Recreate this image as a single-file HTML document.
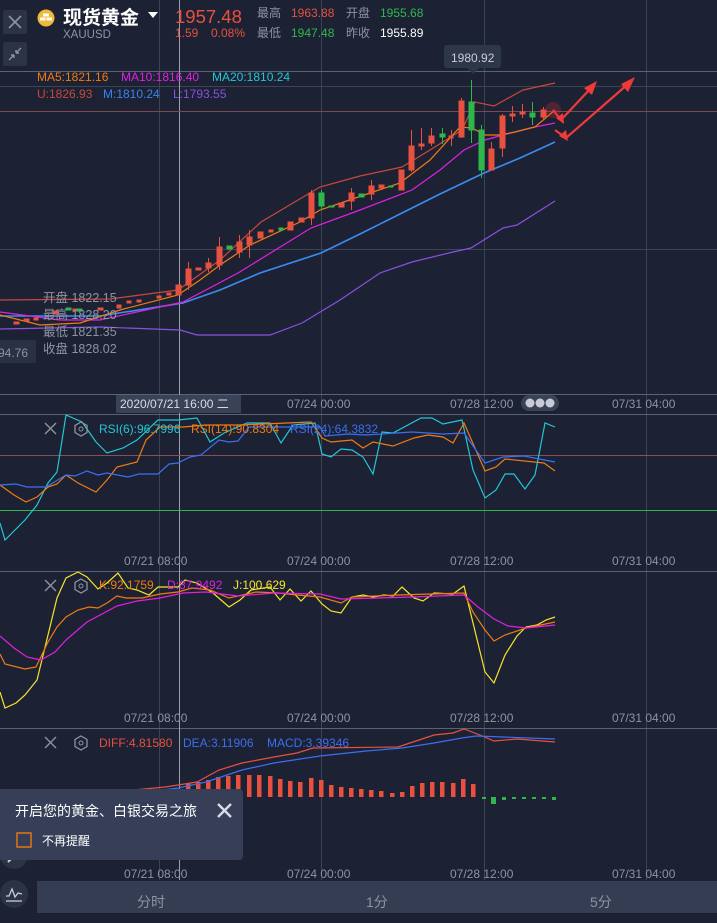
<!DOCTYPE html>
<html><head><meta charset="utf-8"><style>
body{margin:0;width:717px;height:923px;background:#1c2234;overflow:hidden;font-family:"Liberation Sans","Noto Sans CJK SC",sans-serif;}
svg{position:absolute;left:0;top:0}
text{font-family:"Liberation Sans","Noto Sans CJK SC",sans-serif}
</style></head><body>
<svg width="717" height="923" viewBox="0 0 717 923">
<rect width="717" height="923" fill="#1c2234"/>
<!-- grid -->
<g stroke="#3b4356" stroke-width="1">
<line x1="159.5" y1="0" x2="159.5" y2="880"/><line x1="321.5" y1="0" x2="321.5" y2="880"/>
<line x1="484.5" y1="0" x2="484.5" y2="880"/><line x1="646.5" y1="0" x2="646.5" y2="880"/>
<line x1="0" y1="86.5" x2="717" y2="86.5"/><line x1="0" y1="249.5" x2="717" y2="249.5"/>
</g>
<g stroke="#5a6275" stroke-width="1">
<line x1="0" y1="71.5" x2="717" y2="71.5"/><line x1="0" y1="394.5" x2="717" y2="394.5"/>
<line x1="0" y1="414.5" x2="717" y2="414.5"/><line x1="0" y1="571.5" x2="717" y2="571.5"/>
<line x1="0" y1="728.5" x2="717" y2="728.5"/>
</g>
<line x1="179.5" y1="0" x2="179.5" y2="880" stroke="#9aa0ad" stroke-width="1"/>
<line x1="0" y1="111.5" x2="717" y2="111.5" stroke="#7a4a50" stroke-width="1"/>
<line x1="0" y1="455.5" x2="717" y2="455.5" stroke="#8a4d5a" stroke-width="1"/>
<line x1="0" y1="510.5" x2="717" y2="510.5" stroke="#2eb84a" stroke-width="1"/>

<!-- header -->
<rect x="3" y="10" width="24" height="24" rx="2" fill="#2c3344"/>
<path d="M9 16 L21 28 M21 16 L9 28" stroke="#8d93a3" stroke-width="1.6"/>
<rect x="3" y="42" width="24" height="24" rx="2" fill="#2c3344"/>
<path d="M9 60 L14 55 M14 55 h-3 M14 55 v3 M21 48 L16 53 M16 53 h3 M16 53 v-3" stroke="#8d93a3" stroke-width="1.4" fill="none"/>
<circle cx="46" cy="18" r="8.5" fill="#f0b93a"/>
<rect x="43" y="13.5" width="6" height="3" fill="#fff"/><rect x="40" y="17.5" width="5.5" height="3" fill="#fff"/><rect x="46.5" y="17.5" width="5.5" height="3" fill="#fff"/>
<text x="63" y="24" font-size="19" font-weight="bold" fill="#fff">现货黄金</text>
<path d="M148 12 L158 12 L153 18 Z" fill="#fff"/>
<text x="63" y="38" font-size="11.5" fill="#8d93a3">XAUUSD</text>
<text x="175" y="23" font-size="18.5" fill="#e8503f">1957.48</text>
<text x="175" y="37" font-size="12" fill="#e8503f">1.59</text>
<text x="211" y="37" font-size="12" fill="#e8503f">0.08%</text>
<text x="257" y="17" font-size="12" fill="#8d93a3">最高</text>
<text x="291" y="17" font-size="12" fill="#e8503f">1963.88</text>
<text x="346" y="17" font-size="12" fill="#8d93a3">开盘</text>
<text x="380" y="17" font-size="12" fill="#2eb84a">1955.68</text>
<text x="257" y="37" font-size="12" fill="#8d93a3">最低</text>
<text x="291" y="37" font-size="12" fill="#2eb84a">1947.48</text>
<text x="346" y="37" font-size="12" fill="#8d93a3">昨收</text>
<text x="380" y="37" font-size="12" fill="#fff">1955.89</text>

<text x="37" y="81" font-size="12" fill="#ef7b12">MA5:1821.16</text>
<text x="121" y="81" font-size="12" fill="#e020e0">MA10:1816.40</text>
<text x="212" y="81" font-size="12" fill="#22c7d4">MA20:1810.24</text>
<text x="37" y="98" font-size="12" fill="#c8483a">U:1826.93</text>
<text x="103" y="98" font-size="12" fill="#3b82f0">M:1810.24</text>
<text x="173" y="98" font-size="12" fill="#8a50e0">L:1793.55</text>

<rect x="444" y="45" width="57" height="23" rx="3" fill="#2e3649"/>
<path d="M467 68 L473 74 L479 68Z" fill="#2e3649"/>
<text x="451" y="62" font-size="12" fill="#c8ccd6">1980.92</text>

<!-- bollinger & MA -->
<g fill="none" stroke-width="1.2">
<polyline stroke="#c8483a" points="0,300 110,299 178,290 220,260 261,222 320,187 360,176 402,167 430,150 462,130 475,102 494,106 523,90 555,83"/>
<polyline stroke="#3b8cf0" stroke-width="1.6" points="0,316 100,316 183,303 220,290 260,273 321,253 360,234 402,213 440,194 484,173 520,158 555,142"/>
<polyline stroke="#8a50e0" points="0,329 100,327 180,330 197,335 270,335 302,323 340,300 380,273 412,262 453,252 471,248 503,228 517,225 555,201"/>
<polyline stroke="#e020e0" points="0,312 60,320 100,320 183,302 238,273 311,228 360,210 412,190 440,170 464,150 485,140 503,135 530,128 555,123"/>
<polyline stroke="#ef7b12" points="0,315 40,325 80,323 120,310 178,295 200,280 220,265 250,245 300,222 320,210 370,193 400,183 430,160 460,127 472,128 485,135 500,135 515,132 535,127 555,110"/>
</g>

<!-- candles -->
<g id="c">
<g fill="#e8503f" stroke="#e8503f">
<rect x="14" y="322" width="5" height="2"/><rect x="24" y="319" width="5" height="2"/><rect x="34" y="318" width="4" height="2"/>
<rect x="53" y="311" width="5" height="3"/><rect x="73" y="309" width="5" height="2"/><rect x="98" y="308" width="5" height="2"/>
<rect x="117" y="305" width="4" height="3"/><rect x="127" y="301" width="4" height="2"/><rect x="137" y="300" width="4" height="2"/>
<rect x="157" y="296" width="4" height="2"/><rect x="167" y="293" width="4" height="2"/><rect x="176" y="285" width="5" height="10"/>
<rect x="186" y="269" width="5" height="16"/><rect x="196" y="268" width="5" height="2"/><rect x="206" y="263" width="5" height="5"/>
<rect x="217" y="247" width="5" height="18"/><rect x="237" y="242" width="5" height="10"/><rect x="247" y="237" width="5" height="8"/>
<rect x="258" y="232" width="5" height="6"/><rect x="269" y="230" width="4" height="2"/><rect x="288" y="222" width="5" height="8"/>
<rect x="299" y="218" width="5" height="4"/><rect x="309" y="193" width="5" height="25"/><rect x="339" y="203" width="5" height="4"/>
<rect x="349" y="193" width="5" height="8"/><rect x="369" y="186" width="5" height="8"/><rect x="379" y="185" width="5" height="3"/>
<rect x="399" y="170" width="5" height="20"/><rect x="409" y="146" width="5" height="24"/><rect x="419" y="144" width="5" height="2"/>
<rect x="429" y="136" width="5" height="7"/><rect x="449" y="136" width="4" height="2"/><rect x="459" y="101" width="5" height="36"/>
<rect x="489" y="149" width="5" height="21"/><rect x="500" y="116" width="5" height="32"/><rect x="510" y="114" width="5" height="2"/>
<rect x="520" y="112" width="5" height="2"/><rect x="541" y="110" width="5" height="7"/>
</g>
<g stroke="#e8503f" stroke-width="1">
<line x1="188.5" y1="262" x2="188.5" y2="290"/><line x1="208.5" y1="258" x2="208.5" y2="272"/><line x1="219.5" y1="237" x2="219.5" y2="270"/>
<line x1="239.5" y1="235" x2="239.5" y2="258"/><line x1="249.5" y1="230" x2="249.5" y2="258"/><line x1="311.5" y1="190" x2="311.5" y2="225"/>
<line x1="351.5" y1="188" x2="351.5" y2="210"/><line x1="371.5" y1="180" x2="371.5" y2="200"/><line x1="411.5" y1="130" x2="411.5" y2="172"/>
<line x1="421.5" y1="128" x2="421.5" y2="150"/><line x1="431.5" y1="128" x2="431.5" y2="146"/><line x1="451.5" y1="130" x2="451.5" y2="146"/>
<line x1="461.5" y1="98" x2="461.5" y2="138"/><line x1="491.5" y1="142" x2="491.5" y2="158"/><line x1="502.5" y1="114" x2="502.5" y2="157"/>
<line x1="512.5" y1="106" x2="512.5" y2="122"/><line x1="522.5" y1="104" x2="522.5" y2="118"/><line x1="543.5" y1="107" x2="543.5" y2="120"/>
</g>
<g fill="#2eb84a" stroke="#2eb84a">
<rect x="66" y="308" width="5" height="2"/><rect x="77" y="309" width="5" height="2"/><rect x="227" y="246" width="5" height="3"/>
<rect x="279" y="228" width="4" height="2"/><rect x="319" y="193" width="5" height="13"/><rect x="329" y="206" width="5" height="1"/>
<rect x="359" y="194" width="5" height="3"/><rect x="389" y="186" width="4" height="1"/><rect x="440" y="134" width="5" height="3"/>
<rect x="469" y="102" width="5" height="28"/><rect x="479" y="130" width="5" height="40"/><rect x="530" y="113" width="5" height="4"/>
</g>
<g stroke="#2eb84a" stroke-width="1">
<line x1="471.5" y1="80" x2="471.5" y2="143"/><line x1="481.5" y1="125" x2="481.5" y2="178"/><line x1="532.5" y1="102" x2="532.5" y2="125"/>
<line x1="321.5" y1="190" x2="321.5" y2="210"/><line x1="442.5" y1="128" x2="442.5" y2="144"/>
</g>
</g>
<!-- arrows -->
<circle cx="553" cy="110" r="8" fill="#e8303a" opacity="0.25"/>
<g stroke="#f03a3a" stroke-width="2.2" fill="#f03a3a">
<polyline fill="none" points="553,110 561,120 591,88"/>
<path d="M597 81 L584 88 L592 95Z" stroke="none"/>
<path d="M564 124 L556 118 L563 113Z" stroke="none"/>
<polyline fill="none" points="555,130 566,138 628,84"/>
<path d="M635 77 L621 84 L628 92Z" stroke="none"/>
<path d="M568 141 L559 136 L566 130Z" stroke="none"/>
</g>

<!-- info -->
<g font-size="12.5" fill="#8d93a3">
<text x="43" y="302">开盘 1822.15</text><text x="43" y="319">最高 1828.20</text>
<text x="43" y="336">最低 1821.35</text><text x="43" y="353">收盘 1828.02</text>
</g>
<rect x="-4" y="340" width="40" height="23" rx="2" fill="#2a3145"/>
<text x="-2" y="357" font-size="12" fill="#8d93a3">94.76</text>

<!-- time axis -->
<rect x="116" y="395" width="125" height="18" fill="#3a4257"/>
<text x="120" y="408" font-size="12" fill="#d8dce4">2020/07/21 16:00 二</text>
<g font-size="12" fill="#8d93a3">
<text x="287" y="408">07/24 00:00</text><text x="450" y="408">07/28 12:00</text><text x="612" y="408">07/31 04:00</text>
<text x="124" y="565">07/21 08:00</text><text x="287" y="565">07/24 00:00</text><text x="450" y="565">07/28 12:00</text><text x="612" y="565">07/31 04:00</text>
<text x="124" y="722">07/21 08:00</text><text x="287" y="722">07/24 00:00</text><text x="450" y="722">07/28 12:00</text><text x="612" y="722">07/31 04:00</text>
<text x="124" y="878">07/21 08:00</text><text x="287" y="878">07/24 00:00</text><text x="450" y="878">07/28 12:00</text><text x="612" y="878">07/31 04:00</text>
</g>
<rect x="521" y="395" width="38" height="16" rx="8" fill="#3a4257"/>
<circle cx="530" cy="403" r="4.5" fill="#c8ccd6"/><circle cx="540" cy="403" r="4.5" fill="#c8ccd6"/><circle cx="550" cy="403" r="4.5" fill="#c8ccd6"/>

<!-- RSI -->
<g fill="none" stroke-width="1.2">
<polyline stroke="#22c7d4" points="0,523 5,540 25,520 37,505 48,483 57,472 66,415 82,422 96,442 107,453 123,448 137,440 158,420 178,420 197,418 210,442 224,433 247,423 270,423 281,443 293,425 315,423 322,454 331,457 341,449 352,450 363,457 373,474 382,432 393,433 421,418 432,418 443,424 462,420 473,470 485,498 496,490 505,474 514,474 525,489 535,475 545,423 555,427"/>
<polyline stroke="#ef7b12" points="0,485 14,495 26,502 37,497 48,487 57,484 66,475 78,483 96,492 107,480 117,467 137,462 146,440 160,427 183,427 206,425 238,425 311,422 322,438 331,442 352,440 363,448 373,442 393,446 414,438 428,435 443,437 453,443 464,423 485,471 496,467 505,459 544,463 555,471"/>
<polyline stroke="#3b6ff0" points="0,485 16,484 27,487 46,487 66,475 75,476 87,471 98,475 107,473 128,477 139,474 158,474 169,464 178,463 190,457 201,455 219,440 229,442 238,441 249,427 320,427 325,436 348,434 366,435 412,432 443,434 464,433 485,463 503,457 524,456 555,462"/>
</g>
<path d="M45 423 L56 434 M56 423 L45 434" stroke="#8d93a3" stroke-width="1.4"/>
<path d="M81 422 L87 425.5 L87 432.5 L81 436 L75 432.5 L75 425.5Z" stroke="#8d93a3" stroke-width="1.3" fill="none"/><circle cx="81" cy="429" r="2" stroke="#8d93a3" fill="none"/>
<text x="99" y="433" font-size="12" fill="#22c7d4">RSI(6):96.7996</text>
<text x="191" y="433" font-size="12" fill="#ef7b12">RSI(14):90.8304</text>
<text x="290" y="433" font-size="12" fill="#3b6ff0">RSI(24):64.3832</text>

<!-- KDJ -->
<g fill="none" stroke-width="1.2">
<polyline stroke="#f5e52a" points="0,692 5,708 16,703 25,695 37,680 48,635 57,598 66,578 78,572 87,577 98,589 107,583 118,573 128,588 137,590 149,595 158,587 178,587 185,580 197,583 213,593 229,607 240,600 251,590 270,587 280,600 290,589 301,601 311,591 322,604 331,611 341,613 352,597 363,595 373,597 384,595 393,596 402,587 414,598 423,601 434,593 453,594 464,586 485,672 494,683 505,655 517,636 526,627 537,625 546,620 555,617"/>
<polyline stroke="#ef7b12" points="0,654 5,664 25,669 36,667 48,642 57,627 66,617 78,610 89,607 98,608 107,603 117,596 126,598 142,598 160,594 178,592 192,588 210,590 229,598 256,592 279,593 297,595 320,597 341,603 352,597 398,595 464,593 473,612 485,630 494,641 505,635 526,628 555,622"/>
<polyline stroke="#e020e0" points="0,636 14,648 27,657 41,660 55,652 66,640 87,622 117,606 137,601 160,598 183,593 206,592 238,596 274,593 320,594 341,599 412,597 464,595 478,607 494,619 508,626 526,628 555,625"/>
</g>
<path d="M45 580 L56 591 M56 580 L45 591" stroke="#8d93a3" stroke-width="1.4"/>
<path d="M81 579 L87 582.5 L87 589.5 L81 593 L75 589.5 L75 582.5Z" stroke="#8d93a3" stroke-width="1.3" fill="none"/><circle cx="81" cy="586" r="2" stroke="#8d93a3" fill="none"/>
<text x="99" y="589" font-size="12" fill="#ef7b12">K:92.1759</text>
<text x="167" y="589" font-size="12" fill="#e020e0">D:87.9492</text>
<text x="233" y="589" font-size="12" fill="#f5e52a">J:100.629</text>

<!-- MACD -->
<g fill="#e8503f">
<rect x="186" y="783" width="4.5" height="14"/><rect x="196" y="782" width="4.5" height="15"/><rect x="206" y="780" width="4.5" height="17"/>
<rect x="216" y="777" width="4.5" height="20"/><rect x="226" y="776" width="4.5" height="21"/><rect x="236" y="775" width="4.5" height="22"/>
<rect x="247" y="775" width="4.5" height="22"/><rect x="257" y="775" width="4.5" height="22"/><rect x="268" y="776" width="4.5" height="21"/>
<rect x="278" y="779" width="4.5" height="18"/><rect x="288" y="781" width="4.5" height="16"/><rect x="298" y="782" width="4.5" height="15"/>
<rect x="309" y="778" width="4.5" height="19"/><rect x="319" y="780" width="4.5" height="17"/><rect x="329" y="785" width="4.5" height="12"/>
<rect x="339" y="787" width="4.5" height="10"/><rect x="349" y="788" width="4.5" height="9"/><rect x="359" y="789" width="4.5" height="8"/>
<rect x="369" y="790" width="4.5" height="7"/><rect x="379" y="791" width="4.5" height="6"/><rect x="390" y="793" width="4.5" height="4"/>
<rect x="400" y="792" width="4.5" height="5"/><rect x="410" y="786" width="4.5" height="11"/><rect x="420" y="783" width="4.5" height="14"/>
<rect x="430" y="782" width="4.5" height="15"/><rect x="440" y="782" width="4.5" height="15"/><rect x="451" y="783" width="4.5" height="14"/>
<rect x="461" y="779" width="4.5" height="18"/><rect x="471" y="784" width="4.5" height="13"/>
</g>
<g fill="#2eb84a">
<rect x="482" y="797" width="4" height="2"/><rect x="491" y="797" width="5" height="7"/><rect x="502" y="797" width="4" height="3"/>
<rect x="512" y="797" width="4" height="2"/><rect x="522" y="797" width="4" height="2"/><rect x="532" y="797" width="4" height="2"/>
<rect x="542" y="797" width="4" height="2"/><rect x="552" y="797" width="4" height="3"/>
</g>
<g fill="none" stroke-width="1.2">
<polyline stroke="#e8503f" points="123,791 165,787 178,785 197,782 219,770 242,763 274,757 297,753 313,748 398,747 416,741 434,735 453,733 464,729 480,735 494,741 517,739 555,742"/>
<polyline stroke="#3b6ff0" points="123,795 178,788 206,782 242,770 274,763 320,756 366,751 402,748 434,743 462,738 476,736 503,737 555,739"/>
</g>
<path d="M45 737 L56 748 M56 737 L45 748" stroke="#8d93a3" stroke-width="1.4"/>
<path d="M81 736 L87 739.5 L87 746.5 L81 750 L75 746.5 L75 739.5Z" stroke="#8d93a3" stroke-width="1.3" fill="none"/><circle cx="81" cy="743" r="2" stroke="#8d93a3" fill="none"/>
<text x="99" y="747" font-size="12" fill="#e8503f">DIFF:4.81580</text>
<text x="183" y="747" font-size="12" fill="#3b6ff0">DEA:3.11906</text>
<text x="267" y="747" font-size="12" fill="#3b6ff0">MACD:3.39346</text>

<!-- left tool circles -->
<circle cx="14" cy="855" r="14" fill="#2c3344"/>
<path d="M8 862 L14 856" stroke="#c8ccd6" stroke-width="2"/>
<circle cx="14" cy="894" r="14" fill="#2c3344"/>
<path d="M6 896 L9 896 L12 889 L15 897 L18 893 L22 894" stroke="#c8ccd6" stroke-width="1.3" fill="none"/>
<line x1="6" y1="901" x2="22" y2="901" stroke="#c8ccd6" stroke-width="1.3"/>

<!-- bottom bar -->
<rect x="37" y="881" width="680" height="32" fill="#343d52"/>
<g font-size="14" fill="#8d93a3">
<text x="137" y="907">分时</text><text x="366" y="907">1分</text><text x="590" y="907">5分</text>
</g>

<!-- popup -->
<rect x="-4" y="789" width="247" height="71" rx="4" fill="#363f57"/>
<text x="15" y="816" font-size="14" fill="#ffffff">开启您的黄金、白银交易之旅</text>
<path d="M218 804 L231 817 M231 804 L218 817" stroke="#d8dce4" stroke-width="2.4"/>
<rect x="17" y="833" width="14" height="14" fill="none" stroke="#ef7b12" stroke-width="1.4"/>
<text x="42" y="845" font-size="12" fill="#ffffff">不再提醒</text>
</svg>
</body></html>
